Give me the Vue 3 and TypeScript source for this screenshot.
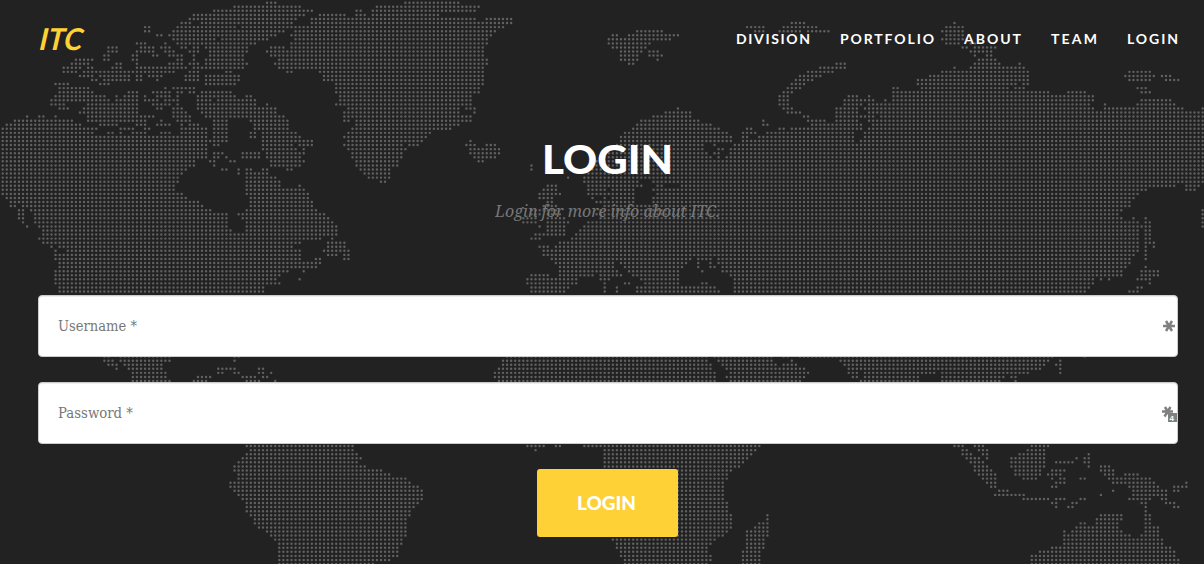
<script setup lang="ts">
interface NavItem { label: string; width: number }

const navItems: NavItem[] = [
  { label: 'DIVISION', width: 73 },
  { label: 'PORTFOLIO', width: 93 },
  { label: 'ABOUT', width: 56 },
  { label: 'TEAM', width: 45 },
  { label: 'LOGIN', width: 50 },
]

// Dotted world map: each line is a grid row, each entry a run of columns.
const northRows = `65-67 99-112
57-73 92-117
52-76 87-88 91-116
47-74 78-84 87-89 91-107
46-72 76-116 119-125
44-46 49-71 76-125
35-36 43-48 49-57 59-123
35-36 42-69 72-121
38-39 41-47 48-67 71-120
42-52 54-65 72-119
33-35 40 43-48 49-53 54-62 71-119
26-28 34-37 39-41 44-45 47-48 50-60 66-69 71-118
26-28 33-37 40-42 46-48 51-60 65-118
25-26 32-33 37-38 41-44 47 51-59 66-118
18-22 25-26 32-33 43-44 47 50-59 68-119
17-21 28-29 33 41-44 46-48 50-60 67-119
15-19 21-22 27-29 33-38 39-45 47-59 68-118
15-18 20-25 26-32 33-42 46-48 55-56 70-71 78-118
19-22 24-31 33-34 36-39 45-48 50-58 79-118
22-23 25-31 33-34 38 45-48 50-58 79-118
13-16 24-26 50-57 82-118
14-21 40 42-47 82-117
14-22 31-33 37-41 43-44 46-47 49-56 82-117
13-25 28 30-33 35 38-41 43 48-57 60-61 83-115
12-14 15-26 28-33 35-36 37-38 40-43 48-51 53-62 83-115
12-15 21-33 37-41 43 48-62 65 82-115
14-16 20-33 38-39 42-44 48-67 85-112 114-116
19-33 42-45 49-67 84-112 116
6 9-10 13 21-37 42-46 50-69 84-112 113-115
3-4 5-17 21-35 39 43-46 52-55 61-70 84-85 87-115
1-19 24-28 33-35 38-41 44 46-48 52-55 62-70 87-112
0-23 29-32 35-36 44-50 52-55 62-70 86-110
0-22 26-27 29 32-35 39-41 44-50 52-55 61-62 64-72 85-105
0-50 52-55 61-62 64-73 84-104
0-55 64-76 85-103 115
0-50 52-53 64-71 73-76 84-98 100-102 114-116 119-121
0-50 64-72 74 85-99 115-122
0-50 52-54 59-63 65-74 86-98 115-122
0-50 52-53 55 59-63 65-73 86-98 116-121
0-47 51-52 56-57 66-74 87-97 117-118
0-47 52 66-73 87-97 130
0-45 54-55 58 60-61 64-65 70-71 88-95 130
0-44 58 60-65 89-95
0-43 60-67 90-95 139
0-43 60-68 93-94
0-42 60-68 73 134-136
0-42 60-74 133-136
0-44 60-75 132-137
1-45 61-75 132-135
2-48 61-76 134-135
2-3 5-49 61-76 133-136
4-5 7-51 60-77 130-136
4-5 8-55 58-79 130-132 134-137
4-5 8-55 59-80 128-131 134-138
5 8-55 60-81 128-131 134-139
6 9-55 60-82 132 134-138
10-56 60-82 134-138
10-82 131-138
9-78 81 130-132
10-12 13-73 80-84
12 14-71 80-84
13 16-73 79-85
13-73 80-82 84-85
13-73 77-78 84-85
14-78
14-77
13-70 74
13-68 130-134
13-67 73 129-141
13-68 129-141
14-64 130-139
14-64 130-138`.split('\n')

const eurasiaRows = `5: 194-197 234
6: 183-187 192-200 232-236
7: 156-162 185-187 191-196 198-203 231-236
8: 150-151 154-155 156-166 232-236
9: 149-152 153-164 231-238
10: 149-159 232-235 238-239
11: 150-158 236-237 239-244
12: 152-157 159-161 238-243
13: 152-156 159-162 239 242-243
14: 152-156 161 240-244
15: 154-155 205-207 239-245 250
16: 201-207 234 238-251
17: 198-204 231-252 277-282
18: 196-201 228-252 276-283 285-287
19: 195-199 225-252 277-282 286-289
20: 194-197 225-249 251-252
21: 193-196 219-220 226-247 249-251 279-281
22: 192-194 219-257 262-266 280-282
23: 191-193 208-210 213 219-268
24: 191-193 207-211 212-214 217 219-268 280-287
25: 191-193 207-211 213-267 271 279-288
26: 166 192-194 205-210 212-268 271-290 295
27: 163-169 193-196 205-210 213-295
28: 160-169 197-198 205-211 212-214 216-295
29: 157-171 187 198-202 205-210 213-295
30: 156-174 187-188 199-204 205-211 214-295
31: 155-176 183-184 191-192 194-211 213-295
32: 153-178 182-185 188-209 212-295
33: 152-179 182-183 186-209 212-295
34: 152-179 182-209 211-295
35: 151-172 175 180-295
36: 148-172 176-177 179-295
37: 148-173 175-176 179-295
38: 147-174 176 178-295
39: 146-295
40: 145-295
41: 144-295
42: 144-295
43: 143-295
44: 143-156 160-295
45: 144-157 161-162 167-288 291-294
46: 144-148 150-155 160-281 291-293
47: 144-155 161-279
48: 145 148 150-155 160-278
49: 146-155 160-277
50: 148-277
51: 147-275 295
52: 146-274 295
53: 147-275 278 281 295
54: 144-279 281-282 295
55: 143-280 281-282 295
56: 142-279 281-282
57: 141-279 281-282
58: 140-279 281-282
59: 137-279 281-283
60: 132-134 136-279 281 283
61: 133-279 281
62: 133-278 281
63: 135-169 171-174 176-277 281
64: 136-150 152-168 171 174 176-277
65: 137-150 153-167 171 174-175 177-276 281
66: 137-151 154-166 172 177-275 280-284
67: 137-145 147-152 155-166 179-275 280-284
68: 147-149 157-166 180-268 270 272 279-282
69: 148 153-154 158-166 172-173 180-268 282
70: 148 151 156-175 180-267 279-280
71: 148 151 156-176 180-266 277-279`.split('\n')

const southRows = `87: 25-26 29-41 57-58 124-173 175-189 192-193 196-258 266
88: 25-27 29-41 57 123-173 176-189 194 206-257 260
89: 26-28 30-39 123-174 177-190 192-195 207-256 259-260
90: 28 31-39 53-57 63-64 122-174 178-197 208-255 260
91: 32-40 53-54 57-58 63-64 66 121-175 179-198 208-210 212-229 231-252 260
92: 32-40 48-51 59-62 64-65 121-175 178-197 209-210 212-225 231-246 248-249
93: 32-41 47-50 60-63 67 122-175 179-196 211-225 231-245 249
109: 60-86 129-133 136-137 143-186 234-236 239-241 253-257
110: 61-86 131 148-185 236-237 240-242 252-256
111: 60-87 148-184 236-238 241-242 250-256 267
112: 59-88 148-183 237-240 242 248-256 264 266-267
113: 58-87 148-182 238-241 248-256 259-263 266-267
114: 57-89 148-181 239-242 248-256 267 270-272
115: 57-93 148-179 239-243 249-255 258-261 270-273
116: 58-95 148-178 240-244 249-255 257-260 271-273 276-279
117: 58-99 148-178 241-244 251-254 258 260-261 265-266 272-282
118: 56-100 148-177 242-244 259-261 273-283 291
119: 56-102 148-177 243-244 258-259 277-284 288-291
120: 57-103 148-177 245-247 273 278-286 288-289
121: 58-103 148-177 244-251 270 278-286
122: 59-103 148-177 251-257 259-261 265-266 277-282 285-286
123: 60-102 148-178 258-259 263-264 280-281 286-288
124: 60-101 148-178 259 262-263 281 288-289
125: 60-100 148-178 281
126: 61-100 148-179 188 270-275 281-282
127: 62-99 148-179 188 269-275 281-282
128: 62-99 148-179 186-188 265-266 269-274 281-282
129: 63-99 148-179 185-188 264-274 281-284
130: 65-99 148-178 183-188 261 263-275 281-284
131: 66-99 148-177 183-188 261-277 280-284
132: 67-98 150-175 183-187 261-285
133: 68-98 151-174 183-187 261-285
134: 68-97 151-173 183-187 258-287
135: 68-97 152-173 182-186 255-288
136: 68-97 152-174 182-186 253-288
137: 68-95 153-174 182-186 253-289
138: 68-91 153-173 182-186 253-289`.split('\n')

const pitch = 4.0676
const origin = 2.7

function rowDots(row: number, runs: string): string {
  const y = (origin + row * pitch).toFixed(2)
  let d = ''
  for (const run of runs.trim().split(' ')) {
    const [from, to = from] = run.split('-').map(Number)
    for (let c = from; c <= to; c++) d += `M${(origin + c * pitch).toFixed(2)} ${y}h0`
  }
  return d
}

function labelledRow(line: string): string {
  const [row, runs] = line.split(':')
  return rowDots(Number(row), runs)
}

const mapPath = [
  ...northRows.map((runs, row) => rowDots(row, runs)),
  ...eurasiaRows.map(labelledRow),
  ...southRows.map(labelledRow),
].join('')
</script>

<template>
  <div class="page">
    <svg class="map" width="1204" height="564" viewBox="0 0 1204 564" aria-hidden="true">
      <path :d="mapPath" />
    </svg>
    <header class="bar">
      <a class="brand">ITC</a>
      <nav class="nav">
        <a v-for="item in navItems" :key="item.label">
          <svg :width="item.width" height="20">
            <text x="0" y="14.5" :textLength="item.width + 1" lengthAdjust="spacing">{{ item.label }}</text>
          </svg>
        </a>
      </nav>
    </header>
    <main class="content">
      <h2 class="title">
        <svg width="140" height="50">
          <text x="4" y="39" textLength="131" lengthAdjust="spacingAndGlyphs">LOGIN</text>
        </svg>
      </h2>
      <h3 class="subtitle">
        <svg width="226" height="24">
          <text x="0" y="17" textLength="225" lengthAdjust="spacingAndGlyphs">Login for more info about ITC.</text>
        </svg>
      </h3>
      <form class="form" @submit.prevent>
        <div class="field">
          <svg width="90" height="24">
            <text x="0" y="17" textLength="79" lengthAdjust="spacingAndGlyphs">Username *</text>
          </svg>
          <svg class="mark" width="16" height="18" viewBox="0 0 16 18">
            <path d="M2 9h12M5 4l6 10M11 4l-6 10" />
          </svg>
        </div>
        <div class="field">
          <svg width="90" height="24">
            <text x="0" y="17" textLength="75" lengthAdjust="spacingAndGlyphs">Password *</text>
          </svg>
          <svg class="mark" width="16" height="18" viewBox="0 0 16 18">
            <path d="M1 7.5h11M4 3l5.5 9.5M9.5 3l-6 9.5" />
            <rect x="7" y="9" width="9" height="9" />
            <text x="8.5" y="16.5">4</text>
          </svg>
        </div>
        <button class="submit" type="submit">
          <svg width="60" height="24">
            <text x="0" y="18.5" textLength="59" lengthAdjust="spacingAndGlyphs">LOGIN</text>
          </svg>
        </button>
      </form>
    </main>
  </div>
</template>

<style>
body { background: #222; overflow: hidden; }
</style>

<style scoped>
.page {
  position: relative;
  width: 1204px;
  height: 564px;
  overflow: hidden;
  background: #222;
  font-family: Lato, "Open Sans", sans-serif;
}
.page svg { display: block; }
.page .nav svg { overflow: visible; }
.map { position: absolute; inset: 0; }
.map path { stroke: #606060; stroke-width: 2.45; stroke-linecap: round; fill: none; }
.bar {
  position: relative;
  display: flex;
  justify-content: space-between;
  align-items: center;
  height: 77px;
  padding: 0 27px 0 40px;
}
.brand {
  color: #fed136;
  font-size: 30px;
  font-weight: 700;
  font-style: italic;
  line-height: 36px;
  transform: translateY(-1px) skewX(-6deg);
}
.nav { display: flex; gap: 31px; }
.nav text { font-size: 14px; font-weight: 700; fill: #fff; }
.content {
  position: relative;
  display: flex;
  flex-direction: column;
  align-items: center;
  padding: 58px 26px 0 38px;
}
.title { margin: 0; }
.title text { font-size: 40px; font-weight: 900; fill: #fff; }
.subtitle { margin: 15px 0 0; }
.subtitle text {
  font: italic 400 16px "Noto Serif", "Droid Serif", "DejaVu Serif", serif;
  fill: #777;
}
.form { width: 1140px; margin-top: 71px; display: flex; flex-direction: column; align-items: center; }
.field {
  box-sizing: border-box;
  width: 100%;
  height: 62px;
  margin-bottom: 25px;
  padding: 0 0 0 19px;
  display: flex;
  align-items: center;
  justify-content: space-between;
  border: 1px solid #ccc;
  border-radius: 4px;
  background: #fff;
  box-shadow: inset 0 1px 1px rgba(0, 0, 0, 0.075);
}
.field text {
  font: 400 14.5px "Roboto Slab", "DejaVu Serif", serif;
  fill: #777;
}
.mark path { stroke: #808080; stroke-width: 2.5; fill: none; }
.mark rect { fill: #808080; }
.field .mark text { font: 700 8px "Liberation Sans", sans-serif; fill: #fff; }
.submit {
  width: 141px;
  height: 68px;
  margin-right: 2px;
  padding: 0;
  display: flex;
  align-items: center;
  justify-content: center;
  border: 0;
  border-radius: 3px;
  background: #fed136;
}
.submit text { font: 900 18px Lato, sans-serif; fill: #fff; }
</style>
